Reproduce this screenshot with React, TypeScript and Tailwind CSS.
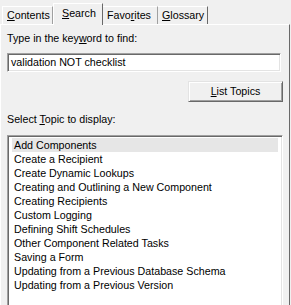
import React from "react";

const items = [
  "Add Components",
  "Create a Recipient",
  "Create Dynamic Lookups",
  "Creating and Outlining a New Component",
  "Creating Recipients",
  "Custom Logging",
  "Defining Shift Schedules",
  "Other Component Related Tasks",
  "Saving a Form",
  "Updating from a Previous Database Schema",
  "Updating from a Previous Version",
];

export default function App() {
  return (
    <div
      className="w-[291px] h-[305px] overflow-hidden bg-[#f0f0f0] text-black text-[10.7px] leading-[13px]"
      style={{ fontFamily: '"Liberation Sans", Arial, sans-serif' }}
    >
      {/* Tab strip */}
      <div className="flex items-end h-[24px] pl-[2px] relative z-10">
        <div className="w-[51px] h-[18px] border-t border-l border-white border-r border-r-[#a0a0a0] flex items-center pl-[4px]">
          <span><span className="underline">C</span>ontents</span>
        </div>
        <div className="w-[50px] h-[22px] -mb-px bg-[#f0f0f0] border-t border-l border-white border-r border-r-[#696969] flex items-start pl-[8px] pt-[3px]">
          <span><span className="underline">S</span>earch</span>
        </div>
        <div className="w-[55px] h-[18px] border-t border-white border-r border-r-[#a0a0a0] flex items-center pl-[4px]">
          <span>Favo<span className="underline">r</span>ites</span>
        </div>
        <div className="w-[50px] h-[18px] border-t border-white border-r border-r-[#696969] flex items-center pl-[4px]">
          <span><span className="underline">G</span>lossary</span>
        </div>
      </div>

      {/* Panel */}
      <div className="w-[290px] h-[290px] border-t border-l border-white border-r border-r-[#696969] flex flex-col pl-[6px] pr-[6px]">
        <div className="mt-[7px] h-[13px]">
          Type in the key<span className="underline">w</span>ord to find:
        </div>
        <div className="mt-[8px] w-[274px] h-[19px] border border-t-[#a0a0a0] border-l-[#a0a0a0] border-r-white border-b-white shadow-[inset_1px_1px_0_#696969,inset_-1px_-1px_0_#e3e3e3] bg-white flex items-center pl-[3px]">
          validation NOT checklist
        </div>
        <div className="mt-[9px] flex justify-end">
          <div className="w-[95px] h-[21px] border border-t-[#e3e3e3] border-l-[#e3e3e3] border-r-[#696969] border-b-[#696969] shadow-[inset_1px_1px_0_#ffffff,inset_-1px_-1px_0_#a0a0a0] bg-[#f0f0f0] flex items-center justify-center">
            <span><span className="underline">L</span>ist Topics</span>
          </div>
        </div>
        <div className="mt-[11px] h-[13px]">
          Select <span className="underline">T</span>opic to display:
        </div>
        <div className="mt-[9px] w-[276px] flex-1 border border-t-[#a0a0a0] border-l-[#a0a0a0] border-r-white border-b-white shadow-[inset_1px_1px_0_#696969,inset_-1px_-1px_0_#e3e3e3] bg-white pl-[4px] pr-[4px] pt-[2px]">
          {items.map((t, i) => (
            <div
              key={t}
              className={`h-[14px] flex items-center pl-[2px] whitespace-nowrap ${i === 0 ? "bg-[#e6e6e6]" : ""}`}
            >
              {t}
            </div>
          ))}
        </div>
      </div>
    </div>
  );
}
